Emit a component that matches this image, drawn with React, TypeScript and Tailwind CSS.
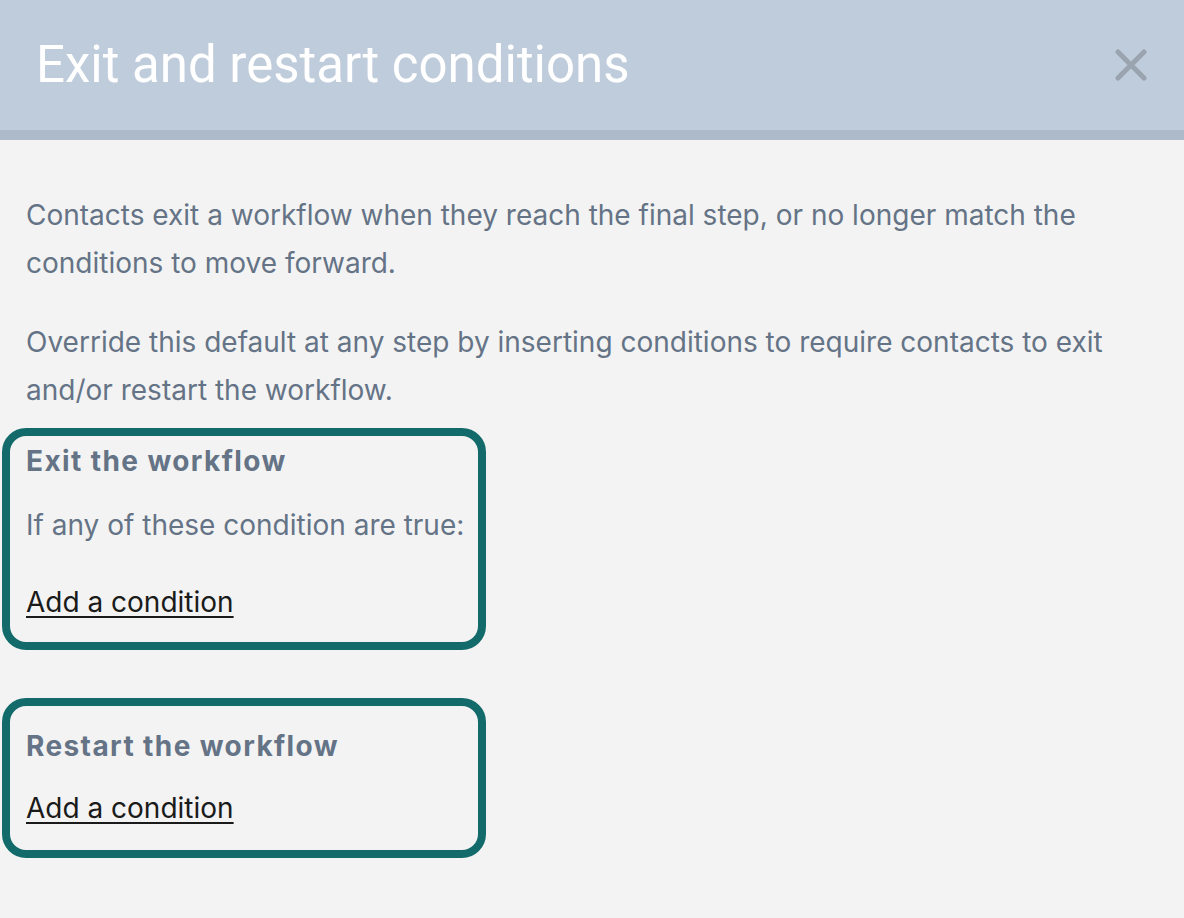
import React from "react";

export default function App() {
  return (
    <div className="w-[1184px] h-[918px] bg-[#f3f3f3] overflow-hidden" style={{ fontFamily: "Inter, 'Noto Sans', sans-serif" }}>
      <header className="h-[140px] bg-[#bfccdb] border-b-[10px] border-[#acbac9] flex items-start justify-between pl-[36px] pr-[37px] pt-[39px]">
        <h1 className="text-white text-[51px] leading-none font-normal" style={{ fontFamily: "Roboto, 'Noto Sans', sans-serif" }}>
          Exit and restart conditions
        </h1>
        <svg width="32" height="32" viewBox="0 0 32 32" className="mt-[10px]">
          <path d="M3 3 L29 29 M29 3 L3 29" stroke="#9aa4b0" strokeWidth="5" strokeLinecap="round" />
        </svg>
      </header>
      <main className="px-[26px] pt-[51px] text-[#657386] text-[28px]">
        <p className="leading-[48px] w-[1110px]">
          Contacts exit a workflow when they reach the final step, or no longer match the conditions to move forward.
        </p>
        <p className="leading-[48px] mt-[31px] w-[1110px]">
          Override this default at any step by inserting conditions to require contacts to exit and/or restart the workflow.
        </p>
        <section className="mt-[14px] -ml-[24px] w-[484px] border-[8px] border-[#126b6a] rounded-[24px] pl-[16px] pt-[9px] pb-[24px]">
          <h2 className="font-bold leading-[32px] tracking-[1.4px]">Exit the workflow</h2>
          <p className="leading-[32px] mt-[32px]">If any of these condition are true:</p>
          <a href="#" className="block mt-[45px] leading-[32px] text-[#1a1a1a] underline underline-offset-[4px] decoration-[2px] w-fit">Add a condition</a>
        </section>
        <section className="mt-[48px] -ml-[24px] w-[484px] border-[8px] border-[#126b6a] rounded-[24px] pl-[16px] pt-[24px] pb-[26px]">
          <h2 className="font-bold leading-[32px] tracking-[1.4px]">Restart the workflow</h2>
          <a href="#" className="block mt-[30px] leading-[32px] text-[#1a1a1a] underline underline-offset-[4px] decoration-[2px] w-fit">Add a condition</a>
        </section>
      </main>
    </div>
  );
}
